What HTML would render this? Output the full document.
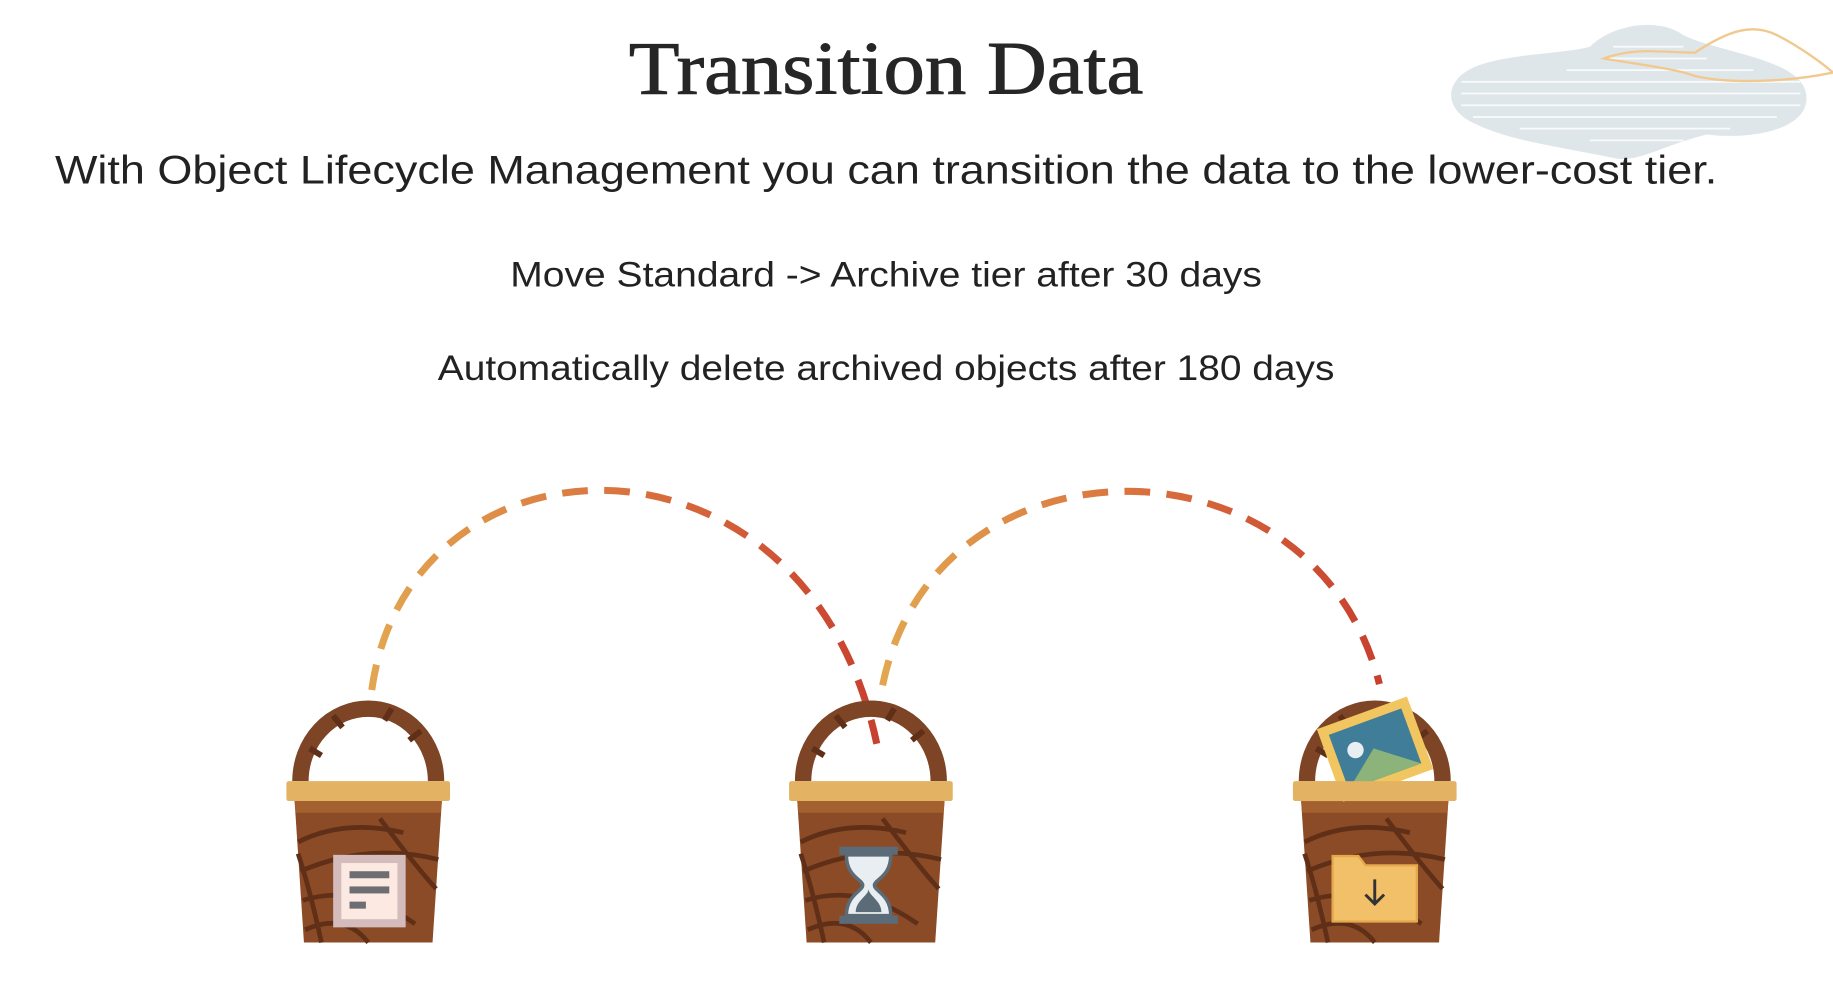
<!DOCTYPE html>
<html><head><meta charset="utf-8"><style>
html,body{margin:0;padding:0;background:#fff;width:1833px;height:987px;overflow:hidden}
svg{display:block}
</style></head><body>
<svg width="1833" height="987" viewBox="0 0 1568 844" preserveAspectRatio="none">
<defs>
<linearGradient id="g1" x1="318" y1="0" x2="750" y2="0" gradientUnits="userSpaceOnUse">
<stop offset="0" stop-color="#e2a650"/><stop offset="0.5" stop-color="#d9733f"/><stop offset="1" stop-color="#c8402f"/></linearGradient>
<linearGradient id="g2" x1="755" y1="0" x2="1180" y2="0" gradientUnits="userSpaceOnUse">
<stop offset="0" stop-color="#e2a650"/><stop offset="0.5" stop-color="#d9733f"/><stop offset="1" stop-color="#c8402f"/></linearGradient>
<g id="bk">
<path d="M-58 668 A58 62 0 0 1 58 668" fill="none" stroke="#7d4426" stroke-width="14"/>
<path d="M-50 640 l10 6 M-30 612 l8 10 M20 606 l-6 10 M45 625 l-10 8" stroke="#5f2f17" stroke-width="5"/>
<path d="M-63 685 L63 685 L55 806 L-55 806 Z" fill="#8b4b27"/>
<path d="M-63 685 L63 685 L62 695 L-62 695 Z" fill="#a5602f"/>
<path d="M-60 720 Q-20 700 30 712 M-58 745 Q0 720 60 735 M-56 770 Q-10 755 40 790 M-54 795 Q-20 780 0 806 M10 700 Q40 740 58 760 M-40 806 Q-50 760 -60 730" fill="none" stroke="#5f2f17" stroke-width="4"/>
<rect x="-70" y="668" width="140" height="17" rx="2" fill="#e3b262"/>
</g>
</defs>
<g fill="none" stroke-width="6" stroke-dasharray="22 14">
<path d="M318 590 C350 360 690 350 750 636" stroke="url(#g1)"/>
<path d="M755 586 C800 365 1125 365 1180 585" stroke="url(#g2)"/>
</g>
<!-- cloud -->
<path d="M1245 70 C1260 45 1330 48 1360 40 C1380 20 1420 15 1440 30 C1470 45 1540 50 1545 80 C1550 110 1500 120 1460 115 C1420 125 1400 140 1380 135 C1330 125 1290 120 1260 105 C1240 95 1238 80 1245 70 Z" fill="#dfe6ea"/>
<g stroke="#fff" stroke-width="1.5" fill="none" opacity="0.8">
<path d="M1250 70 H1540 M1250 80 H1540 M1250 90 H1540 M1260 100 H1520 M1300 110 H1480 M1340 60 H1500 M1370 50 H1460 M1380 40 H1440 M1360 120 H1440"/>
</g>
<path d="M1372 50 C1400 40 1420 45 1450 45 C1480 25 1500 20 1520 30 C1540 40 1560 55 1568 62 C1530 70 1480 72 1450 65 C1430 58 1400 55 1372 50 Z" fill="none" stroke="#f1c98e" stroke-width="2"/>
<use href="#bk" x="315"/>
<use href="#bk" x="745"/>
<use href="#bk" x="1176"/>
<!-- doc -->
<rect x="285" y="731" width="62" height="62" fill="#d4bcbd"/>
<rect x="292" y="738" width="48" height="48" fill="#fbe9e2"/>
<rect x="299" y="745" width="34" height="6" fill="#6d6e73"/>
<rect x="299" y="758" width="34" height="6" fill="#6d6e73"/>
<rect x="299" y="771" width="14" height="6" fill="#6d6e73"/>
<!-- hourglass -->
<rect x="718" y="724" width="50" height="7" fill="#5b6b78"/>
<rect x="718" y="783" width="50" height="7" fill="#5b6b78"/>
<path d="M724 731 H762 C762 750 748 752 748 757 C748 762 762 765 762 783 H724 C724 765 738 762 738 757 C738 752 724 750 724 731 Z" fill="#e9eef2" stroke="#5b6b78" stroke-width="3"/>
<path d="M732 780 C732 770 743 766 743 760 C743 766 754 770 754 780 Z" fill="#5b6b78"/>
<!-- picture -->
<g transform="rotate(-20 1175 640)">
<rect x="1135" y="608" width="82" height="66" fill="#f1c560"/>
<rect x="1143" y="616" width="66" height="50" fill="#3f7d99"/>
<circle cx="1160" cy="636" r="7" fill="#e9eef2"/>
<path d="M1143 666 L1175 640 L1209 666 Z" fill="#8cb47a"/>
</g>
<rect x="1112" y="668" width="128" height="17" fill="#e3b262"/>
<!-- folder -->
<path d="M1140 732 H1162 L1168 740 H1212 V788 H1140 Z" fill="#f3c06a" stroke="#e6a84d" stroke-width="2"/>
<path d="M1176 752 V772 M1168 765 L1176 773 L1184 765" fill="none" stroke="#333" stroke-width="2.5"/>
<g font-family="'Liberation Sans',sans-serif" fill="#222" text-anchor="middle">
<text x="758" y="80" font-family="'Liberation Serif',serif" font-size="64" fill="#262626" stroke="#262626" stroke-width="0.8" textLength="440" lengthAdjust="spacingAndGlyphs">Transition Data</text>
<text x="758" y="157" font-size="34" textLength="1422" lengthAdjust="spacingAndGlyphs">With Object Lifecycle Management you can transition the data to the lower-cost tier.</text>
<text x="758" y="245" font-size="30" textLength="643" lengthAdjust="spacingAndGlyphs">Move Standard -&gt; Archive tier after 30 days</text>
<text x="758" y="325" font-size="30" textLength="767" lengthAdjust="spacingAndGlyphs">Automatically delete archived objects after 180 days</text>
</g>
</svg>
</body></html>
